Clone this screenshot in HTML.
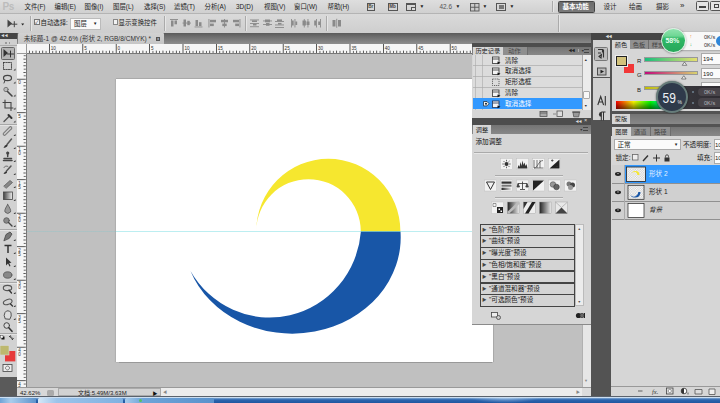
<!DOCTYPE html>
<html lang="zh-CN">
<head>
<meta charset="utf-8">
<title>Photoshop CS5 - 未标题-1</title>
<style>
html,body{margin:0;padding:0}
body{width:720px;height:403px;overflow:hidden;position:relative;background:#c0c0c0;
 font-family:"Liberation Sans","Noto Sans CJK SC",sans-serif;font-size:6.4px;line-height:8px;color:#1a1a1a}
.a{position:absolute;white-space:nowrap}
.t{position:absolute;white-space:nowrap;line-height:8px;height:8px}
svg{position:absolute;overflow:visible}
#menubar{left:0;top:0;width:720px;height:14px;background:linear-gradient(#dedede,#d0d0d0);border-bottom:1px solid #b4b4b4;box-sizing:border-box}
#menubar .t{top:2.5px;color:#222}
#optbar{left:0;top:14px;width:720px;height:19px;background:linear-gradient(#dadada,#cecece)}
#optbar .t{top:5px}
.vsep{position:absolute;width:1px;background:#aaa;box-shadow:1px 0 0 #e6e6e6}
#tabbar{left:0;top:33px;width:720px;height:11px;background:linear-gradient(#5a5a5a 0,#6a6a6a 3px,#8e8e8e 11px)}
#doctab{left:18px;top:33.3px;width:146px;height:10.9px;background:linear-gradient(#d2d2d2,#c6c6c6);border-radius:1px 1px 0 0}
#hruler{left:17px;top:44px;width:574px;height:9.5px;background:#f6f6f6;border-bottom:0.7px solid #777;box-sizing:border-box}
#vruler{left:17px;top:53px;width:9.6px;height:334px;background:#f6f6f6;border-right:0.7px solid #777;box-sizing:border-box}
.rn{position:absolute;font-size:4.6px;line-height:5px;color:#333}
#doc{left:115.8px;top:78.8px;width:377.5px;height:283.4px;background:#fff;box-shadow:0 0.8px 0.8px #999,0.6px 0 0.6px #aaa,0 -0.6px 0.6px #aaa,-1px 0 0.8px #b0b0b0}
#guide{left:27px;top:230.9px;width:555px;height:1px;background:linear-gradient(90deg,rgba(95,200,210,.2) 0,rgba(95,200,210,.2) 88.8px,rgba(95,215,222,.42) 88.8px,rgba(95,215,222,.42) 466.3px,rgba(95,200,210,.2) 466.3px)}
#toolbar{left:0;top:33px;width:17px;height:344px;background:#d2d2d2}
#tbhead{left:0;top:33px;width:17px;height:6.2px;background:#454545}
#tbbelow{left:0;top:377px;width:17px;height:19px;background:#5a5a5a}
#status{left:17px;top:387px;width:574px;height:9px;background:#d8d8d8;border-top:1px solid #999;box-sizing:border-box}
#taskbar{left:0;top:396px;width:720px;height:7px;background:linear-gradient(#5a626c 0,#5a626c 0.8px,#d4e3f2 0.9px,#c4d8ee 2.2px,#4a7fbe 2.6px,#2a62ab 4.5px,#1f57a0 7px)}
.panel{background:#d6d6d6}
.dk{background:#4d4d4d}
.mid{background:#8a8a8a}
.ptab{position:absolute;background:#d6d6d6;height:9px;line-height:9px;text-align:center;font-size:6.2px;color:#222}
.ptab2{position:absolute;height:9px;line-height:9px;text-align:center;font-size:6.2px;color:#444;border-right:1px solid #6d6d6d;box-sizing:border-box}
</style>
</head>
<body>

<div class="a" id="doc"></div>
<svg width="720" height="403" style="left:0;top:0">
<path fill="#f6e72f" d="M256.2 231.4 A72.1 72.6 0 0 1 400.4 231.4 L360.8 231.4 A52.3 52.3 0 0 0 256.2 231.4 Z"/>
<path fill="#1856a7" d="M400.5 231.4 A108.5 96.3 0 0 1 190.5 270.9 A91.5 93.6 0 0 0 360.9 231.4 Z"/>
</svg>
<div class="a" id="guide"></div>
<div class="a" id="hruler">
<svg width="574" height="10" style="left:0;top:0"><rect x="5.28" y="6.6" width="0.8" height="2.4" fill="#333"/><rect x="8.62" y="6.9" width="0.8" height="2.1" fill="#444"/><rect x="11.96" y="6.6" width="0.8" height="2.4" fill="#333"/><rect x="15.30" y="6.9" width="0.8" height="2.1" fill="#444"/><rect x="18.64" y="6.6" width="0.8" height="2.4" fill="#333"/><rect x="21.98" y="6.9" width="0.8" height="2.1" fill="#444"/><rect x="25.32" y="6.6" width="0.8" height="2.4" fill="#333"/><rect x="28.66" y="6.9" width="0.8" height="2.1" fill="#444"/><rect x="32.00" y="0" width="0.8" height="9" fill="#333"/><rect x="35.34" y="6.9" width="0.8" height="2.1" fill="#444"/><rect x="38.68" y="6.6" width="0.8" height="2.4" fill="#333"/><rect x="42.02" y="6.9" width="0.8" height="2.1" fill="#444"/><rect x="45.36" y="6.6" width="0.8" height="2.4" fill="#333"/><rect x="48.70" y="6.9" width="0.8" height="2.1" fill="#444"/><rect x="52.04" y="6.6" width="0.8" height="2.4" fill="#333"/><rect x="55.38" y="6.9" width="0.8" height="2.1" fill="#444"/><rect x="58.72" y="6.6" width="0.8" height="2.4" fill="#333"/><rect x="62.06" y="6.9" width="0.8" height="2.1" fill="#444"/><rect x="65.40" y="0" width="0.8" height="9" fill="#333"/><rect x="68.74" y="6.9" width="0.8" height="2.1" fill="#444"/><rect x="72.08" y="6.6" width="0.8" height="2.4" fill="#333"/><rect x="75.42" y="6.9" width="0.8" height="2.1" fill="#444"/><rect x="78.76" y="6.6" width="0.8" height="2.4" fill="#333"/><rect x="82.10" y="6.9" width="0.8" height="2.1" fill="#444"/><rect x="85.44" y="6.6" width="0.8" height="2.4" fill="#333"/><rect x="88.78" y="6.9" width="0.8" height="2.1" fill="#444"/><rect x="92.12" y="6.6" width="0.8" height="2.4" fill="#333"/><rect x="95.46" y="6.9" width="0.8" height="2.1" fill="#444"/><rect x="98.80" y="0" width="0.8" height="9" fill="#333"/><rect x="102.14" y="6.9" width="0.8" height="2.1" fill="#444"/><rect x="105.48" y="6.6" width="0.8" height="2.4" fill="#333"/><rect x="108.82" y="6.9" width="0.8" height="2.1" fill="#444"/><rect x="112.16" y="6.6" width="0.8" height="2.4" fill="#333"/><rect x="115.50" y="6.9" width="0.8" height="2.1" fill="#444"/><rect x="118.84" y="6.6" width="0.8" height="2.4" fill="#333"/><rect x="122.18" y="6.9" width="0.8" height="2.1" fill="#444"/><rect x="125.52" y="6.6" width="0.8" height="2.4" fill="#333"/><rect x="128.86" y="6.9" width="0.8" height="2.1" fill="#444"/><rect x="132.20" y="0" width="0.8" height="9" fill="#333"/><rect x="135.54" y="6.9" width="0.8" height="2.1" fill="#444"/><rect x="138.88" y="6.6" width="0.8" height="2.4" fill="#333"/><rect x="142.22" y="6.9" width="0.8" height="2.1" fill="#444"/><rect x="145.56" y="6.6" width="0.8" height="2.4" fill="#333"/><rect x="148.90" y="6.9" width="0.8" height="2.1" fill="#444"/><rect x="152.24" y="6.6" width="0.8" height="2.4" fill="#333"/><rect x="155.58" y="6.9" width="0.8" height="2.1" fill="#444"/><rect x="158.92" y="6.6" width="0.8" height="2.4" fill="#333"/><rect x="162.26" y="6.9" width="0.8" height="2.1" fill="#444"/><rect x="165.60" y="0" width="0.8" height="9" fill="#333"/><rect x="168.94" y="6.9" width="0.8" height="2.1" fill="#444"/><rect x="172.28" y="6.6" width="0.8" height="2.4" fill="#333"/><rect x="175.62" y="6.9" width="0.8" height="2.1" fill="#444"/><rect x="178.96" y="6.6" width="0.8" height="2.4" fill="#333"/><rect x="182.30" y="6.9" width="0.8" height="2.1" fill="#444"/><rect x="185.64" y="6.6" width="0.8" height="2.4" fill="#333"/><rect x="188.98" y="6.9" width="0.8" height="2.1" fill="#444"/><rect x="192.32" y="6.6" width="0.8" height="2.4" fill="#333"/><rect x="195.66" y="6.9" width="0.8" height="2.1" fill="#444"/><rect x="199.00" y="0" width="0.8" height="9" fill="#333"/><rect x="202.34" y="6.9" width="0.8" height="2.1" fill="#444"/><rect x="205.68" y="6.6" width="0.8" height="2.4" fill="#333"/><rect x="209.02" y="6.9" width="0.8" height="2.1" fill="#444"/><rect x="212.36" y="6.6" width="0.8" height="2.4" fill="#333"/><rect x="215.70" y="6.9" width="0.8" height="2.1" fill="#444"/><rect x="219.04" y="6.6" width="0.8" height="2.4" fill="#333"/><rect x="222.38" y="6.9" width="0.8" height="2.1" fill="#444"/><rect x="225.72" y="6.6" width="0.8" height="2.4" fill="#333"/><rect x="229.06" y="6.9" width="0.8" height="2.1" fill="#444"/><rect x="232.40" y="0" width="0.8" height="9" fill="#333"/><rect x="235.74" y="6.9" width="0.8" height="2.1" fill="#444"/><rect x="239.08" y="6.6" width="0.8" height="2.4" fill="#333"/><rect x="242.42" y="6.9" width="0.8" height="2.1" fill="#444"/><rect x="245.76" y="6.6" width="0.8" height="2.4" fill="#333"/><rect x="249.10" y="6.9" width="0.8" height="2.1" fill="#444"/><rect x="252.44" y="6.6" width="0.8" height="2.4" fill="#333"/><rect x="255.78" y="6.9" width="0.8" height="2.1" fill="#444"/><rect x="259.12" y="6.6" width="0.8" height="2.4" fill="#333"/><rect x="262.46" y="6.9" width="0.8" height="2.1" fill="#444"/><rect x="265.80" y="0" width="0.8" height="9" fill="#333"/><rect x="269.14" y="6.9" width="0.8" height="2.1" fill="#444"/><rect x="272.48" y="6.6" width="0.8" height="2.4" fill="#333"/><rect x="275.82" y="6.9" width="0.8" height="2.1" fill="#444"/><rect x="279.16" y="6.6" width="0.8" height="2.4" fill="#333"/><rect x="282.50" y="6.9" width="0.8" height="2.1" fill="#444"/><rect x="285.84" y="6.6" width="0.8" height="2.4" fill="#333"/><rect x="289.18" y="6.9" width="0.8" height="2.1" fill="#444"/><rect x="292.52" y="6.6" width="0.8" height="2.4" fill="#333"/><rect x="295.86" y="6.9" width="0.8" height="2.1" fill="#444"/><rect x="299.20" y="0" width="0.8" height="9" fill="#333"/><rect x="302.54" y="6.9" width="0.8" height="2.1" fill="#444"/><rect x="305.88" y="6.6" width="0.8" height="2.4" fill="#333"/><rect x="309.22" y="6.9" width="0.8" height="2.1" fill="#444"/><rect x="312.56" y="6.6" width="0.8" height="2.4" fill="#333"/><rect x="315.90" y="6.9" width="0.8" height="2.1" fill="#444"/><rect x="319.24" y="6.6" width="0.8" height="2.4" fill="#333"/><rect x="322.58" y="6.9" width="0.8" height="2.1" fill="#444"/><rect x="325.92" y="6.6" width="0.8" height="2.4" fill="#333"/><rect x="329.26" y="6.9" width="0.8" height="2.1" fill="#444"/><rect x="332.60" y="0" width="0.8" height="9" fill="#333"/><rect x="335.94" y="6.9" width="0.8" height="2.1" fill="#444"/><rect x="339.28" y="6.6" width="0.8" height="2.4" fill="#333"/><rect x="342.62" y="6.9" width="0.8" height="2.1" fill="#444"/><rect x="345.96" y="6.6" width="0.8" height="2.4" fill="#333"/><rect x="349.30" y="6.9" width="0.8" height="2.1" fill="#444"/><rect x="352.64" y="6.6" width="0.8" height="2.4" fill="#333"/><rect x="355.98" y="6.9" width="0.8" height="2.1" fill="#444"/><rect x="359.32" y="6.6" width="0.8" height="2.4" fill="#333"/><rect x="362.66" y="6.9" width="0.8" height="2.1" fill="#444"/><rect x="366.00" y="0" width="0.8" height="9" fill="#333"/><rect x="369.34" y="6.9" width="0.8" height="2.1" fill="#444"/><rect x="372.68" y="6.6" width="0.8" height="2.4" fill="#333"/><rect x="376.02" y="6.9" width="0.8" height="2.1" fill="#444"/><rect x="379.36" y="6.6" width="0.8" height="2.4" fill="#333"/><rect x="382.70" y="6.9" width="0.8" height="2.1" fill="#444"/><rect x="386.04" y="6.6" width="0.8" height="2.4" fill="#333"/><rect x="389.38" y="6.9" width="0.8" height="2.1" fill="#444"/><rect x="392.72" y="6.6" width="0.8" height="2.4" fill="#333"/><rect x="396.06" y="6.9" width="0.8" height="2.1" fill="#444"/><rect x="399.40" y="0" width="0.8" height="9" fill="#333"/><rect x="402.74" y="6.9" width="0.8" height="2.1" fill="#444"/><rect x="406.08" y="6.6" width="0.8" height="2.4" fill="#333"/><rect x="409.42" y="6.9" width="0.8" height="2.1" fill="#444"/><rect x="412.76" y="6.6" width="0.8" height="2.4" fill="#333"/><rect x="416.10" y="6.9" width="0.8" height="2.1" fill="#444"/><rect x="419.44" y="6.6" width="0.8" height="2.4" fill="#333"/><rect x="422.78" y="6.9" width="0.8" height="2.1" fill="#444"/><rect x="426.12" y="6.6" width="0.8" height="2.4" fill="#333"/><rect x="429.46" y="6.9" width="0.8" height="2.1" fill="#444"/><rect x="432.80" y="0" width="0.8" height="9" fill="#333"/><rect x="436.14" y="6.9" width="0.8" height="2.1" fill="#444"/><rect x="439.48" y="6.6" width="0.8" height="2.4" fill="#333"/><rect x="442.82" y="6.9" width="0.8" height="2.1" fill="#444"/><rect x="446.16" y="6.6" width="0.8" height="2.4" fill="#333"/><rect x="449.50" y="6.9" width="0.8" height="2.1" fill="#444"/><rect x="452.84" y="6.6" width="0.8" height="2.4" fill="#333"/><rect x="456.18" y="6.9" width="0.8" height="2.1" fill="#444"/><rect x="459.52" y="6.6" width="0.8" height="2.4" fill="#333"/><rect x="462.86" y="6.9" width="0.8" height="2.1" fill="#444"/><rect x="466.20" y="0" width="0.8" height="9" fill="#333"/><rect x="469.54" y="6.9" width="0.8" height="2.1" fill="#444"/><rect x="472.88" y="6.6" width="0.8" height="2.4" fill="#333"/><rect x="476.22" y="6.9" width="0.8" height="2.1" fill="#444"/><rect x="479.56" y="6.6" width="0.8" height="2.4" fill="#333"/><rect x="482.90" y="6.9" width="0.8" height="2.1" fill="#444"/><rect x="486.24" y="6.6" width="0.8" height="2.4" fill="#333"/><rect x="489.58" y="6.9" width="0.8" height="2.1" fill="#444"/><rect x="492.92" y="6.6" width="0.8" height="2.4" fill="#333"/><rect x="496.26" y="6.9" width="0.8" height="2.1" fill="#444"/><rect x="499.60" y="0" width="0.8" height="9" fill="#333"/><rect x="502.94" y="6.9" width="0.8" height="2.1" fill="#444"/><rect x="506.28" y="6.6" width="0.8" height="2.4" fill="#333"/><rect x="509.62" y="6.9" width="0.8" height="2.1" fill="#444"/><rect x="512.96" y="6.6" width="0.8" height="2.4" fill="#333"/><rect x="516.30" y="6.9" width="0.8" height="2.1" fill="#444"/><rect x="519.64" y="6.6" width="0.8" height="2.4" fill="#333"/><rect x="522.98" y="6.9" width="0.8" height="2.1" fill="#444"/><rect x="526.32" y="6.6" width="0.8" height="2.4" fill="#333"/><rect x="529.66" y="6.9" width="0.8" height="2.1" fill="#444"/><rect x="533.00" y="0" width="0.8" height="9" fill="#333"/><rect x="536.34" y="6.9" width="0.8" height="2.1" fill="#444"/><rect x="539.68" y="6.6" width="0.8" height="2.4" fill="#333"/><rect x="543.02" y="6.9" width="0.8" height="2.1" fill="#444"/><rect x="546.36" y="6.6" width="0.8" height="2.4" fill="#333"/><rect x="549.70" y="6.9" width="0.8" height="2.1" fill="#444"/><rect x="553.04" y="6.6" width="0.8" height="2.4" fill="#333"/><rect x="556.38" y="6.9" width="0.8" height="2.1" fill="#444"/><rect x="559.72" y="6.6" width="0.8" height="2.4" fill="#333"/><rect x="563.06" y="6.9" width="0.8" height="2.1" fill="#444"/><rect x="566.40" y="0" width="0.8" height="9" fill="#333"/><rect x="569.74" y="6.9" width="0.8" height="2.1" fill="#444"/></svg>
<span class="rn" style="left:33.8px;top:1.6px">10</span>
<span class="rn" style="left:67.2px;top:1.6px">5</span>
<span class="rn" style="left:100.6px;top:1.6px">0</span>
<span class="rn" style="left:134.0px;top:1.6px">5</span>
<span class="rn" style="left:167.4px;top:1.6px">10</span>
<span class="rn" style="left:200.8px;top:1.6px">15</span>
<span class="rn" style="left:234.2px;top:1.6px">20</span>
<span class="rn" style="left:267.6px;top:1.6px">25</span>
<span class="rn" style="left:301.0px;top:1.6px">30</span>
<span class="rn" style="left:334.4px;top:1.6px">35</span>
<span class="rn" style="left:367.8px;top:1.6px">40</span>
<span class="rn" style="left:401.2px;top:1.6px">45</span>
<span class="rn" style="left:434.6px;top:1.6px">50</span>
</div>
<div class="a" id="vruler">
<svg width="10" height="334" style="left:0;top:0"><rect x="6.7" y="2.35" width="2.1" height="0.8" fill="#444"/><rect x="6.4" y="5.70" width="2.4" height="0.8" fill="#333"/><rect x="6.7" y="9.05" width="2.1" height="0.8" fill="#444"/><rect x="6.4" y="12.40" width="2.4" height="0.8" fill="#333"/><rect x="6.7" y="15.75" width="2.1" height="0.8" fill="#444"/><rect x="6.4" y="19.10" width="2.4" height="0.8" fill="#333"/><rect x="6.7" y="22.45" width="2.1" height="0.8" fill="#444"/><rect x="0" y="25.80" width="8.8" height="0.8" fill="#333"/><rect x="6.7" y="29.15" width="2.1" height="0.8" fill="#444"/><rect x="6.4" y="32.50" width="2.4" height="0.8" fill="#333"/><rect x="6.7" y="35.85" width="2.1" height="0.8" fill="#444"/><rect x="6.4" y="39.20" width="2.4" height="0.8" fill="#333"/><rect x="6.7" y="42.55" width="2.1" height="0.8" fill="#444"/><rect x="6.4" y="45.90" width="2.4" height="0.8" fill="#333"/><rect x="6.7" y="49.25" width="2.1" height="0.8" fill="#444"/><rect x="6.4" y="52.60" width="2.4" height="0.8" fill="#333"/><rect x="6.7" y="55.95" width="2.1" height="0.8" fill="#444"/><rect x="0" y="59.30" width="8.8" height="0.8" fill="#333"/><rect x="6.7" y="62.65" width="2.1" height="0.8" fill="#444"/><rect x="6.4" y="66.00" width="2.4" height="0.8" fill="#333"/><rect x="6.7" y="69.35" width="2.1" height="0.8" fill="#444"/><rect x="6.4" y="72.70" width="2.4" height="0.8" fill="#333"/><rect x="6.7" y="76.05" width="2.1" height="0.8" fill="#444"/><rect x="6.4" y="79.40" width="2.4" height="0.8" fill="#333"/><rect x="6.7" y="82.75" width="2.1" height="0.8" fill="#444"/><rect x="6.4" y="86.10" width="2.4" height="0.8" fill="#333"/><rect x="6.7" y="89.45" width="2.1" height="0.8" fill="#444"/><rect x="0" y="92.80" width="8.8" height="0.8" fill="#333"/><rect x="6.7" y="96.15" width="2.1" height="0.8" fill="#444"/><rect x="6.4" y="99.50" width="2.4" height="0.8" fill="#333"/><rect x="6.7" y="102.85" width="2.1" height="0.8" fill="#444"/><rect x="6.4" y="106.20" width="2.4" height="0.8" fill="#333"/><rect x="6.7" y="109.55" width="2.1" height="0.8" fill="#444"/><rect x="6.4" y="112.90" width="2.4" height="0.8" fill="#333"/><rect x="6.7" y="116.25" width="2.1" height="0.8" fill="#444"/><rect x="6.4" y="119.60" width="2.4" height="0.8" fill="#333"/><rect x="6.7" y="122.95" width="2.1" height="0.8" fill="#444"/><rect x="0" y="126.30" width="8.8" height="0.8" fill="#333"/><rect x="6.7" y="129.65" width="2.1" height="0.8" fill="#444"/><rect x="6.4" y="133.00" width="2.4" height="0.8" fill="#333"/><rect x="6.7" y="136.35" width="2.1" height="0.8" fill="#444"/><rect x="6.4" y="139.70" width="2.4" height="0.8" fill="#333"/><rect x="6.7" y="143.05" width="2.1" height="0.8" fill="#444"/><rect x="6.4" y="146.40" width="2.4" height="0.8" fill="#333"/><rect x="6.7" y="149.75" width="2.1" height="0.8" fill="#444"/><rect x="6.4" y="153.10" width="2.4" height="0.8" fill="#333"/><rect x="6.7" y="156.45" width="2.1" height="0.8" fill="#444"/><rect x="0" y="159.80" width="8.8" height="0.8" fill="#333"/><rect x="6.7" y="163.15" width="2.1" height="0.8" fill="#444"/><rect x="6.4" y="166.50" width="2.4" height="0.8" fill="#333"/><rect x="6.7" y="169.85" width="2.1" height="0.8" fill="#444"/><rect x="6.4" y="173.20" width="2.4" height="0.8" fill="#333"/><rect x="6.7" y="176.55" width="2.1" height="0.8" fill="#444"/><rect x="6.4" y="179.90" width="2.4" height="0.8" fill="#333"/><rect x="6.7" y="183.25" width="2.1" height="0.8" fill="#444"/><rect x="6.4" y="186.60" width="2.4" height="0.8" fill="#333"/><rect x="6.7" y="189.95" width="2.1" height="0.8" fill="#444"/><rect x="0" y="193.30" width="8.8" height="0.8" fill="#333"/><rect x="6.7" y="196.65" width="2.1" height="0.8" fill="#444"/><rect x="6.4" y="200.00" width="2.4" height="0.8" fill="#333"/><rect x="6.7" y="203.35" width="2.1" height="0.8" fill="#444"/><rect x="6.4" y="206.70" width="2.4" height="0.8" fill="#333"/><rect x="6.7" y="210.05" width="2.1" height="0.8" fill="#444"/><rect x="6.4" y="213.40" width="2.4" height="0.8" fill="#333"/><rect x="6.7" y="216.75" width="2.1" height="0.8" fill="#444"/><rect x="6.4" y="220.10" width="2.4" height="0.8" fill="#333"/><rect x="6.7" y="223.45" width="2.1" height="0.8" fill="#444"/><rect x="0" y="226.80" width="8.8" height="0.8" fill="#333"/><rect x="6.7" y="230.15" width="2.1" height="0.8" fill="#444"/><rect x="6.4" y="233.50" width="2.4" height="0.8" fill="#333"/><rect x="6.7" y="236.85" width="2.1" height="0.8" fill="#444"/><rect x="6.4" y="240.20" width="2.4" height="0.8" fill="#333"/><rect x="6.7" y="243.55" width="2.1" height="0.8" fill="#444"/><rect x="6.4" y="246.90" width="2.4" height="0.8" fill="#333"/><rect x="6.7" y="250.25" width="2.1" height="0.8" fill="#444"/><rect x="6.4" y="253.60" width="2.4" height="0.8" fill="#333"/><rect x="6.7" y="256.95" width="2.1" height="0.8" fill="#444"/><rect x="0" y="260.30" width="8.8" height="0.8" fill="#333"/><rect x="6.7" y="263.65" width="2.1" height="0.8" fill="#444"/><rect x="6.4" y="267.00" width="2.4" height="0.8" fill="#333"/><rect x="6.7" y="270.35" width="2.1" height="0.8" fill="#444"/><rect x="6.4" y="273.70" width="2.4" height="0.8" fill="#333"/><rect x="6.7" y="277.05" width="2.1" height="0.8" fill="#444"/><rect x="6.4" y="280.40" width="2.4" height="0.8" fill="#333"/><rect x="6.7" y="283.75" width="2.1" height="0.8" fill="#444"/><rect x="6.4" y="287.10" width="2.4" height="0.8" fill="#333"/><rect x="6.7" y="290.45" width="2.1" height="0.8" fill="#444"/><rect x="0" y="293.80" width="8.8" height="0.8" fill="#333"/><rect x="6.7" y="297.15" width="2.1" height="0.8" fill="#444"/><rect x="6.4" y="300.50" width="2.4" height="0.8" fill="#333"/><rect x="6.7" y="303.85" width="2.1" height="0.8" fill="#444"/><rect x="6.4" y="307.20" width="2.4" height="0.8" fill="#333"/><rect x="6.7" y="310.55" width="2.1" height="0.8" fill="#444"/><rect x="6.4" y="313.90" width="2.4" height="0.8" fill="#333"/><rect x="6.7" y="317.25" width="2.1" height="0.8" fill="#444"/><rect x="6.4" y="320.60" width="2.4" height="0.8" fill="#333"/><rect x="6.7" y="323.95" width="2.1" height="0.8" fill="#444"/><rect x="0" y="327.30" width="8.8" height="0.8" fill="#333"/><rect x="6.7" y="330.65" width="2.1" height="0.8" fill="#444"/></svg>
<span class="rn" style="left:1.2px;top:27.0px">0</span>
<span class="rn" style="left:1.2px;top:60.5px">5</span>
<span class="rn" style="left:1.2px;top:94.0px">1</span>
<span class="rn" style="left:1.2px;top:98.2px">0</span>
<span class="rn" style="left:1.2px;top:127.5px">1</span>
<span class="rn" style="left:1.2px;top:131.7px">5</span>
<span class="rn" style="left:1.2px;top:161.0px">2</span>
<span class="rn" style="left:1.2px;top:165.2px">0</span>
<span class="rn" style="left:1.2px;top:194.5px">2</span>
<span class="rn" style="left:1.2px;top:198.7px">5</span>
<span class="rn" style="left:1.2px;top:228.0px">3</span>
<span class="rn" style="left:1.2px;top:232.2px">0</span>
<span class="rn" style="left:1.2px;top:261.5px">3</span>
<span class="rn" style="left:1.2px;top:265.7px">5</span>
<span class="rn" style="left:1.2px;top:295.0px">4</span>
<span class="rn" style="left:1.2px;top:299.2px">0</span>
<span class="rn" style="left:1.2px;top:328.5px">4</span>
<span class="rn" style="left:1.2px;top:332.7px">5</span>
</div>
<div class="a" style="left:17px;top:44px;width:9.6px;height:9.5px;background:#f6f6f6;border-right:1px solid #999;border-bottom:1px solid #999;box-sizing:border-box"></div>
<!-- tab bar -->
<div class="a" id="tabbar"></div>
<div class="a" id="doctab"><span class="t" style="left:5.7px;top:2px;font-size:6.55px;color:#333">未标题-1 @ 42.6% (形状 2, RGB/8/CMYK) *</span>
<span class="a" style="left:137.5px;top:3.4px;width:4.6px;height:4.6px;border:0.6px solid #555;box-sizing:border-box;font-size:4.5px;line-height:3.4px;text-align:center;color:#444">×</span></div>

<!-- menu bar -->
<div class="a" id="menubar">
<span class="a" style="left:2.5px;top:0.5px;font-size:10px;line-height:12px;font-weight:bold;color:#bcbcbc;letter-spacing:-0.3px">Ps</span>
<span class="t" style="left:24.5px">文件(F)</span>
<span class="t" style="left:54.5px">编辑(E)</span>
<span class="t" style="left:84.5px">图像(I)</span>
<span class="t" style="left:113px">图层(L)</span>
<span class="t" style="left:144px">选择(S)</span>
<span class="t" style="left:174px">滤镜(T)</span>
<span class="t" style="left:204.5px">分析(A)</span>
<span class="t" style="left:236px">3D(D)</span>
<span class="t" style="left:264px">视图(V)</span>
<span class="t" style="left:294px">窗口(W)</span>
<span class="t" style="left:327.5px">帮助(H)</span>
<!-- app bar icons -->
<span class="a" style="left:367px;top:3px;width:7.5px;height:7.5px;border:0.7px solid #555;box-sizing:border-box;font-size:4.6px;line-height:6px;text-align:center;font-weight:bold;color:#444">Br</span>
<span class="a" style="left:387.5px;top:3px;width:10px;height:7.5px;border:0.7px solid #555;box-sizing:border-box;font-size:4.6px;line-height:6px;text-align:center;font-weight:bold;color:#444">Mb</span>
<span class="a" style="left:406px;top:2.5px;width:10px;height:8.5px;border:0.9px solid #555;border-top-width:2px;box-sizing:border-box"></span>
<span class="a" style="left:410.5px;top:6.5px;width:5.5px;height:4.5px;border:0.7px solid #555;box-sizing:border-box;background:#ddd"></span>
<span class="t" style="left:419.5px;font-size:4.8px;top:3px;color:#222">▼</span>
<span class="t" style="left:439.5px;color:#555">42.6</span>
<span class="t" style="left:455.5px;font-size:4.8px;top:3px;color:#222">▼</span>
<svg width="10" height="9" style="left:470px;top:2.5px" fill="none" stroke="#555" stroke-width="0.9"><rect x="0.5" y="0.5" width="8.5" height="7.5" fill="#ccc"/><path d="M4.75 0.5v7.5M0.5 4.25h8.5"/></svg>
<span class="t" style="left:482.5px;font-size:4.8px;top:3px;color:#222">▼</span>
<span class="a" style="left:496px;top:2.5px;width:10px;height:8.5px;border:0.8px solid #555;box-sizing:border-box"></span>
<span class="a" style="left:498.5px;top:4.5px;width:5px;height:4.5px;background:#777"></span>
<span class="t" style="left:509.5px;font-size:4.8px;top:3px;color:#222">▼</span>
<span class="vsep" style="left:552px;top:1px;height:11px"></span>
<span class="a" style="left:557.5px;top:0.5px;width:37px;height:12px;background:linear-gradient(#6c6c6c,#7a7a7a);border-radius:1.5px;border:0.5px solid #444;box-sizing:border-box"></span>
<span class="t" style="left:562.5px;color:#fff;font-weight:bold;top:2.5px;font-size:6.6px">基本功能</span>
<span class="t" style="left:603.5px;font-size:6.6px">设计</span>
<span class="t" style="left:629px;font-size:6.6px">绘画</span>
<span class="t" style="left:656px;font-size:6.6px">摄影</span>
<span class="t" style="left:680px;font-size:8px;top:1.8px;letter-spacing:-1px">»</span>
<span class="a" style="left:696px;top:1px;width:12.5px;height:9.5px;border:0.8px solid #555;border-radius:1.5px;box-sizing:border-box;background:#e4e4e4"></span>
<span class="a" style="left:699px;top:6.2px;width:6.5px;height:1.6px;border:0.6px solid #444;box-sizing:border-box;background:#fff"></span>
<span class="a" style="left:710px;top:1px;width:12.5px;height:9.5px;border:0.8px solid #555;border-radius:1.5px;box-sizing:border-box;background:#e4e4e4"></span>
<span class="a" style="left:714px;top:3.5px;width:5px;height:4px;border:0.7px solid #444;box-sizing:border-box"></span>
</div>

<!-- options bar -->
<div class="a" id="optbar">
<svg width="20" height="12" style="left:6px;top:3.5px"><path d="M1.5 1.5 L1.5 9.5 L6.2 5.5 Z" fill="#444"/><path d="M8.3 3.2v6M5.3 6.2h6" stroke="#444" stroke-width="1" fill="none"/><path d="M15.2 5.5h3l-1.5 2z" fill="#222"/></svg>
<span class="vsep" style="left:29.5px;top:2px;height:15px"></span>
<span class="a" style="left:34px;top:5px;width:5.5px;height:5.5px;border:0.6px solid #777;background:#f2f2f2;box-sizing:border-box;font-size:5px;line-height:4.5px;color:#333">✓</span>
<span class="t" style="left:40.5px">自动选择:</span>
<span class="a" style="left:70px;top:4px;width:31px;height:11.5px;background:#fafafa;border:0.5px solid #bbb;box-sizing:border-box"></span>
<span class="t" style="left:74px;top:6px">图层</span>
<span class="t" style="left:93px;font-size:4.4px;top:6px">▼</span>
<span class="a" style="left:112.5px;top:5px;width:5.5px;height:5.5px;border:0.6px solid #888;background:#f2f2f2;box-sizing:border-box"></span>
<span class="t" style="left:118.5px">显示变换控件</span>
<span class="vsep" style="left:164px;top:2px;height:15px"></span>
<svg width="180" height="12" style="left:170px;top:4px" fill="#8a8a8a" stroke="none">
<g id="al"><rect x="0" y="1" width="8" height="0.9"/><rect x="1" y="2.5" width="2.5" height="6"/><rect x="4.5" y="2.5" width="2.5" height="3.8"/></g>
<g transform="translate(12.5 0)"><rect x="0" y="4.6" width="8.5" height="0.9"/><rect x="1" y="1.5" width="2.5" height="7"/><rect x="4.8" y="2.8" width="2.5" height="4.4"/></g>
<g transform="translate(24.5 0)"><rect x="0" y="8.5" width="8" height="0.9"/><rect x="1" y="2" width="2.5" height="6"/><rect x="4.5" y="4.2" width="2.5" height="3.8"/></g>
<g transform="translate(38 0)"><rect x="0.5" y="1" width="0.9" height="8.5"/><rect x="2" y="1.8" width="6" height="2.5"/><rect x="2" y="5.6" width="3.8" height="2.5"/></g>
<g transform="translate(50 0)"><rect x="4" y="1" width="0.9" height="8.5"/><rect x="1" y="1.8" width="7" height="2.5"/><rect x="2.3" y="5.6" width="4.4" height="2.5"/></g>
<g transform="translate(62 0)"><rect x="7.5" y="1" width="0.9" height="8.5"/><rect x="1" y="1.8" width="6" height="2.5"/><rect x="3.2" y="5.6" width="3.8" height="2.5"/></g>
<g transform="translate(80 0)"><rect x="0" y="1.5" width="9" height="0.9"/><rect x="0" y="5" width="9" height="0.9"/><rect x="0" y="8.3" width="9" height="0.9"/><rect x="2" y="2.4" width="5" height="1.6"/><rect x="3" y="5.9" width="3.5" height="1.6"/></g>
<g transform="translate(93 0)"><rect x="0" y="2.5" width="9" height="0.9"/><rect x="0" y="6" width="9" height="0.9"/><rect x="2" y="1.5" width="5" height="2.8"/><rect x="3" y="5" width="3.5" height="2.8"/></g>
<g transform="translate(105 0)"><rect x="0" y="3" width="9" height="0.9"/><rect x="0" y="6.5" width="9" height="0.9"/><rect x="0" y="9" width="9" height="0.9"/><rect x="2" y="1.4" width="5" height="1.6"/><rect x="3" y="4.9" width="3.5" height="1.6"/></g>
<g transform="translate(120 0)"><rect x="1" y="1" width="0.9" height="8.5"/><rect x="4.5" y="1" width="0.9" height="8.5"/><rect x="1.9" y="2.5" width="1.8" height="5"/><rect x="5.4" y="3.5" width="1.8" height="3.5"/></g>
<g transform="translate(131.5 0)"><rect x="2.3" y="1" width="0.9" height="8.5"/><rect x="6" y="1" width="0.9" height="8.5"/><rect x="1" y="2.5" width="3.4" height="5"/><rect x="5" y="3.5" width="3" height="3.5"/></g>
<g transform="translate(143 0)"><rect x="3" y="1" width="0.9" height="8.5"/><rect x="7" y="1" width="0.9" height="8.5"/><rect x="1.2" y="2.5" width="1.8" height="5"/><rect x="5.2" y="3.5" width="1.8" height="3.5"/></g>
<g transform="translate(162.5 0)"><rect x="0" y="2" width="3" height="6.5"/><rect x="5.5" y="2" width="3" height="6.5"/><rect x="3.8" y="0.8" width="0.9" height="9"/></g>
</svg>
<span class="vsep" style="left:244.5px;top:2px;height:15px"></span>
<span class="vsep" style="left:326px;top:2px;height:15px"></span>
<span class="vsep" style="left:558px;top:1px;height:17px"></span>
</div>

<!-- status bar -->
<div class="a" id="status">
<span class="t" style="left:3px;top:0.6px;font-size:6px;color:#222">42.62%</span>
<span class="a" style="left:30px;top:1.5px;width:6.5px;height:6px;border-radius:1.5px;background:#aaa"></span>
<span class="a" style="left:41px;top:0.3px;width:112px;height:8px;border:0.5px solid #aaa;box-sizing:border-box;background:#d2d2d2"></span>
<span class="t" style="left:61px;top:0.6px;font-size:6px;color:#222">文档:5.49M/3.63M</span>
<span class="t" style="left:135.5px;top:1px;font-size:5px;color:#111">▶</span>
<span class="a" style="left:143px;top:0;width:422px;height:8.2px;background:#ececec;border-left:0.5px solid #aaa"></span>
<span class="t" style="left:146px;top:1px;font-size:4px;color:#888">◀</span>
<span class="t" style="left:559px;top:1px;font-size:4px;color:#888">▶</span>
<span class="a" style="left:565px;top:0;width:9px;height:8.2px;background:#dcdcdc"></span>
</div>
<!-- canvas vertical scrollbar -->
<div class="a" style="left:582px;top:53px;width:9px;height:334px;background:#e6e6e6;border-left:0.5px solid #b0b0b0;box-sizing:border-box"></div>
<span class="t" style="left:584px;top:377px;font-size:4px;color:#888">▼</span>
<!-- windows taskbar sliver -->
<div class="a" id="taskbar"></div>
<div class="a" style="left:0;top:398.3px;width:36px;height:5px;background:linear-gradient(90deg,#6fa3d6,#a9cdec 30%,#5d93cc)"></div>
<div class="a" style="left:37.5px;top:398.4px;width:85px;height:5px;background:linear-gradient(90deg,#d6e8f7 0,#9cc4ea 22%,#7fb1e1);border-radius:1.5px 1.5px 0 0"></div>
<div class="a" style="left:125px;top:398.4px;width:89px;height:5px;background:linear-gradient(90deg,#a8cbea 0,#6ea4d8 20%,#5a92cc);border-radius:1.5px 1.5px 0 0"></div>
<div class="a" style="left:139px;top:399px;width:3px;height:3px;background:#58c060;border-radius:50%"></div>
<div class="a" style="left:470px;top:398.3px;width:70px;height:5px;background:radial-gradient(ellipse at 50% 0,rgba(200,225,250,.55),rgba(200,225,250,0) 70%)"></div>

<!-- toolbox -->
<div class="a" id="toolbar"></div>
<div class="a" id="tbhead"><span class="a" style="left:1px;top:1px;font-size:3.5px;line-height:4px;color:#ddd">◀◀</span></div>
<div class="a" style="left:0;top:39.2px;width:17px;height:6.8px;background:#cfcfcf;border-bottom:0.5px solid #aaa;box-sizing:border-box"></div>
<div class="a" style="left:5px;top:41.7px;width:7px;height:2px;background:repeating-linear-gradient(90deg,#999 0,#999 0.7px,transparent 0.7px,transparent 1.4px)"></div>
<div class="a" style="left:0.8px;top:47px;width:14.5px;height:12.6px;background:#b4b4b4;border:0.7px solid #666;border-radius:1.5px;box-sizing:border-box"></div>
<div class="a" style="left:0;top:124px;width:17px;height:1px;background:#a8a8a8;box-shadow:0 1px 0 #e4e4e4"></div>
<div class="a" style="left:0;top:228.5px;width:17px;height:1px;background:#a8a8a8;box-shadow:0 1px 0 #e4e4e4"></div>
<div class="a" style="left:0;top:281.5px;width:17px;height:1px;background:#a8a8a8;box-shadow:0 1px 0 #e4e4e4"></div>
<div class="a" style="left:0;top:333px;width:17px;height:1px;background:#a8a8a8;box-shadow:0 1px 0 #e4e4e4"></div>
<svg width="17" height="345" style="left:0;top:33px" fill="none" stroke="#444" stroke-width="1" stroke-linecap="round">
<!-- move (y=53 => local 20) -->
<path d="M3.5 16 L3.5 24 L8 20 Z" fill="#333" stroke="none"/><path d="M10.5 18v6M7.5 21h6" stroke="#333"/>
<!-- marquee 66 => 33 -->
<rect x="3.5" y="29.5" width="8" height="7" stroke-dasharray="1.4 1" stroke="#333" stroke-width="0.8"/>
<!-- lasso 79 => 46 -->
<ellipse cx="7.5" cy="45" rx="4" ry="2.6" stroke="#444" stroke-width="1.2"/><path d="M5 47.5 L4 50" stroke="#444"/>
<!-- wand 92 => 59 -->
<circle cx="6" cy="56.5" r="2.2" stroke="#666" fill="#bbb" stroke-width="0.8"/><path d="M7.5 58.5 L12 63" stroke="#444" stroke-width="1.6"/>
<!-- crop 105 => 72 -->
<path d="M5 67v8h8M3 69.5h8v8" stroke="#444" stroke-width="1.1"/>
<!-- eyedropper 117.5 => 84.5 -->
<path d="M4 88.5 L9 83.5" stroke="#555" stroke-width="1.4"/><path d="M8.5 82 L11.5 85" stroke="#333" stroke-width="2"/>
<!-- heal 131 => 98 -->
<path d="M4.5 101 L10.5 95" stroke="#777" stroke-width="3.6"/><path d="M4.5 101 L10.5 95" stroke="#ccc" stroke-width="1.6"/>
<!-- brush 144 => 111 -->
<path d="M11.5 106 L7 111.5" stroke="#555" stroke-width="1.5"/><path d="M3.5 115 Q5 111 7.5 112 Q8 114 3.5 115Z" fill="#333" stroke="none"/>
<!-- stamp 157 => 124 -->
<path d="M7.7 119.5v4M4 125.5h7.5M3.5 127.5h8.5" stroke="#444" stroke-width="1.5"/><circle cx="7.7" cy="120" r="1.6" fill="#444" stroke="none"/>
<!-- history brush 170 => 137 -->
<path d="M11 133 L6.5 138" stroke="#555" stroke-width="1.5"/><path d="M3.5 141 Q5 137.5 7 138.5 Q7.5 140.5 3.5 141Z" fill="#333" stroke="none"/><path d="M4 134.5a2.5 2.5 0 0 1 4 -1" stroke="#555" stroke-width="0.8"/>
<!-- eraser 183 => 150 -->
<path d="M4 153 L10 147.5 L12.5 149.5 L6.5 155 Z" fill="#888" stroke="#555" stroke-width="0.7"/>
<!-- gradient 196 => 163 -->
<rect x="3.5" y="159" width="9" height="7.5" fill="url(#gr1)" stroke="#444" stroke-width="0.8"/>
<!-- blur 209 => 176 -->
<path d="M7.7 171.5 Q11.5 177 10.5 179 Q7.7 182 5 179 Q4 177 7.7 171.5Z" fill="#999" stroke="#555" stroke-width="0.8"/>
<!-- dodge 222 => 189 -->
<circle cx="6.5" cy="187.5" r="2.8" fill="#888" stroke="#555" stroke-width="0.8"/><path d="M8.5 189.5 L12 193" stroke="#444" stroke-width="1.4"/>
<!-- pen 236 => 203 -->
<path d="M4 207.5 L6 201.5 L10 199 L12 201 L9.5 205 Z" fill="#777" stroke="#444" stroke-width="0.8"/>
<!-- T 249 => 216 -->
<path d="M4.5 212.5h7M8 212.5v7.5" stroke="#333" stroke-width="1.5" stroke-linecap="butt"/>
<!-- path select 262 => 229 -->
<path d="M6 224.5 L6 232.5 L8 230.5 L9.5 233.5 L10.5 233 L9.2 230 L11.5 229.8 Z" fill="#333" stroke="none"/>
<!-- ellipse shape 275 => 242 -->
<ellipse cx="7.7" cy="242" rx="4.2" ry="3.2" fill="#888" stroke="#555" stroke-width="0.8"/>
<!-- 3D rotate 288.7 => 255.7 -->
<ellipse cx="7.5" cy="255" rx="4.2" ry="2.6" stroke="#555" stroke-width="1.1"/><path d="M9 257 L11.5 260" stroke="#333" stroke-width="1.3"/>
<!-- 3D orbit 302 => 269 -->
<ellipse cx="7.7" cy="269" rx="4.5" ry="2.5" stroke="#555" stroke-width="1.1" transform="rotate(-20 7.7 269)"/><path d="M10.5 271 L12.5 273" stroke="#333" stroke-width="1.2"/>
<!-- hand 315 => 282 -->
<path d="M5 285.5 Q3.2 282 5 279.5 L6.5 278 L8 277.8 L9.5 278.3 L11 279.5 Q12 283 10 286 Z" fill="#ddd" stroke="#444" stroke-width="0.9"/>
<!-- zoom 327 => 294 -->
<circle cx="6.7" cy="292.5" r="2.8" stroke="#444" stroke-width="1" fill="#d8d8d8"/><path d="M8.8 294.8 L12 298.3" stroke="#333" stroke-width="1.6"/>
<!-- mini default colors 339 => 306 -->
<rect x="1.5" y="303.5" width="3" height="3" fill="#111" stroke="none"/><rect x="0.5" y="302.5" width="2.5" height="2.5" fill="#fff" stroke="#333" stroke-width="0.4"/>
<path d="M9.5 303.5 q3 -0.5 3 3M9.5 303.5l1.3 -1M9.5 303.5l1.3 1.2M12.5 306.5l-1.2 -1M12.5 306.5l1 -1.2" stroke="#333" stroke-width="0.7"/>
<!-- bg/fg swatches -->
<rect x="5" y="318" width="10.3" height="10.4" fill="#e73a3a" stroke="none"/>
<rect x="0" y="312.5" width="9" height="9.5" fill="#bdb86e" stroke="#d8d8d8" stroke-width="0.6"/>
<!-- quick mask 368.5 => 335.5 -->
<rect x="3" y="331.5" width="9" height="7" fill="#eee" stroke="#444" stroke-width="0.8"/><circle cx="7.5" cy="335" r="2" stroke="#555" stroke-width="0.7" stroke-dasharray="1 0.7"/>
<defs><linearGradient id="gr1"><stop offset="0" stop-color="#444"/><stop offset="1" stop-color="#eee"/></linearGradient></defs>
<!-- fly-out triangles -->
<g fill="#333" stroke="none">
<path d="M13.5 37.5h2v-2z"/><path d="M13.5 50.5h2v-2z"/><path d="M13.5 63.5h2v-2z"/><path d="M13.5 76.5h2v-2z"/><path d="M13.5 89.5h2v-2z"/>
<path d="M13.5 103h2v-2z"/><path d="M13.5 116h2v-2z"/><path d="M13.5 129h2v-2z"/><path d="M13.5 142h2v-2z"/><path d="M13.5 155h2v-2z"/><path d="M13.5 168h2v-2z"/><path d="M13.5 181h2v-2z"/><path d="M13.5 194h2v-2z"/>
<path d="M13.5 208h2v-2z"/><path d="M13.5 221h2v-2z"/><path d="M13.5 234h2v-2z"/><path d="M13.5 247h2v-2z"/>
<path d="M13.5 261h2v-2z"/><path d="M13.5 274h2v-2z"/><path d="M13.5 287h2v-2z"/>
</g>
</svg>
<div class="a" id="tbbelow"></div>

<!-- history panel -->
<div class="a dk" style="left:472px;top:43px;width:119px;height:3.5px"></div>
<div class="a" style="left:472px;top:46.5px;width:119px;height:8.5px;background:linear-gradient(#747474,#888)"></div>
<div class="ptab" style="left:473px;top:46.5px;width:29.5px;height:8.5px;line-height:8.5px">历史记录</div>
<div class="ptab2" style="left:502.5px;top:46.5px;width:25px;height:8.5px;line-height:8.5px;background:#8e8e8e;color:#4a4a4a">动作</div>
<span class="t" style="left:568.5px;top:47px;font-size:3.6px;color:#222;letter-spacing:-0.6px">◀◀</span>
<span class="a" style="left:577.5px;top:48.5px;width:1px;height:5px;background:repeating-linear-gradient(#aaa 0,#aaa 0.6px,transparent 0.6px,transparent 1.2px)"></span>
<span class="t" style="left:581px;top:47px;font-size:3.6px;color:#333">▼</span>
<span class="a" style="left:584px;top:48.5px;width:4.5px;height:4.5px;background:repeating-linear-gradient(#444 0,#444 0.7px,transparent 0.7px,transparent 1.5px)"></span>
<div class="a" style="left:472px;top:55px;width:119px;height:62.5px;background:#d6d6d6"></div>
<!-- rows -->
<div class="a" style="left:473px;top:55px;width:108.5px;height:54.5px;background:#dcdcdc;
 background-image:linear-gradient(#aaa,#aaa),linear-gradient(#aaa,#aaa),linear-gradient(#aaa,#aaa),linear-gradient(#aaa,#aaa),linear-gradient(90deg,#b0b0b0,#b0b0b0),linear-gradient(90deg,#b0b0b0,#b0b0b0);
 background-size:100% 0.7px,100% 0.7px,100% 0.7px,100% 0.7px,0.7px 100%,0.7px 100%;
 background-position:0 10.3px,0 21.3px,0 32px,0 43px,1.5px 0,8.8px 0;background-repeat:no-repeat"></div>
<div class="a" style="left:473px;top:98px;width:108.5px;height:11.3px;background:#3399ff"></div>
<svg width="40" height="60" style="left:473px;top:55px" fill="none" stroke="#333" stroke-width="0.8">
<g id="hi"><rect x="19.5" y="2" width="6.5" height="6.5" fill="#f4f4f4"/><path d="M19.5 4h6.5" /><path d="M24.5 6.5l3 1.3 -3 1.5z" fill="#111" stroke="none"/></g>
<g transform="translate(0 11)"><rect x="19.5" y="2" width="6.5" height="6.5" fill="#f4f4f4"/><path d="M19.5 4h6.5" /><path d="M24.5 6.5l3 1.3 -3 1.5z" fill="#111" stroke="none"/></g>
<rect x="19.5" y="24" width="6.5" height="6.5" stroke-dasharray="1.2 0.9" stroke-width="0.7"/>
<g transform="translate(0 33)"><rect x="19.5" y="2" width="6.5" height="6.5" fill="#f4f4f4"/><path d="M19.5 4h6.5" /><path d="M24.5 6.5l3 1.3 -3 1.5z" fill="#111" stroke="none"/></g>
<g transform="translate(0 44)"><rect x="19.5" y="2" width="6.5" height="6.5" fill="#f4f4f4" stroke="#235"/><path d="M19.5 4h6.5" stroke="#235"/><path d="M24.5 6.5l3 1.3 -3 1.5z" fill="#012" stroke="none"/></g>
<!-- history state pointer -->
<path d="M10.5 46.5h3.5l2 2.2 -2 2.2h-3.5z" fill="#f4f4f4" stroke="#123" stroke-width="0.7"/><circle cx="13" cy="48.7" r="1" fill="#123" stroke="none"/>
</svg>
<span class="t" style="left:505px;top:56.5px;font-size:6.6px">清除</span>
<span class="t" style="left:505px;top:67px;font-size:6.6px">取消选择</span>
<span class="t" style="left:505px;top:78px;font-size:6.6px">矩形选框</span>
<span class="t" style="left:505px;top:89px;font-size:6.6px">清除</span>
<span class="t" style="left:505px;top:100px;font-size:6.6px;color:#fff">取消选择</span>
<!-- history scrollbar -->
<div class="a" style="left:581.5px;top:55px;width:9px;height:54.5px;background:#ececec;border-left:0.5px solid #aaa;box-sizing:border-box"></div>
<span class="t" style="left:584px;top:56px;font-size:3.6px;color:#333">▲</span>
<span class="t" style="left:584px;top:101.5px;font-size:3.6px;color:#333">▼</span>
<div class="a" style="left:583px;top:91px;width:6.5px;height:8px;background:#f8f8f8;border:0.5px solid #aaa;box-sizing:border-box;border-radius:1px"></div>
<!-- history footer icons -->
<svg width="50" height="8" style="left:538px;top:110px" fill="none" stroke="#555" stroke-width="0.8">
<rect x="2" y="1.5" width="7" height="5" fill="#aaa"/><path d="M2 3h7"/>
<rect x="19" y="1" width="5.5" height="5.5" fill="#ddd"/><path d="M15 4h3" stroke="#777"/>
<path d="M35 2.2h6.5l-0.8 4.6h-5z" fill="#999"/><path d="M34.2 2h8" stroke="#444" stroke-width="1"/>
</svg>

<!-- adjustments panel -->
<div class="a dk" style="left:472px;top:117.5px;width:119px;height:7px"></div>
<span class="t" style="left:575.5px;top:117.5px;font-size:3.4px;color:#ddd;letter-spacing:-0.5px">◀◀</span>
<span class="t" style="left:584px;top:117px;font-size:5.5px;color:#ddd;line-height:7px">×</span>
<div class="a" style="left:472px;top:124.5px;width:119px;height:9.5px;background:linear-gradient(#747474,#888)"></div>
<div class="ptab" style="left:473px;top:125px;width:18px">调整</div>
<span class="t" style="left:579.5px;top:125.5px;font-size:3.6px;color:#333">▼</span>
<span class="a" style="left:583px;top:127px;width:4.5px;height:4.5px;background:repeating-linear-gradient(#444 0,#444 0.7px,transparent 0.7px,transparent 1.5px)"></span>
<div class="a panel" style="left:472px;top:134px;width:119px;height:190.5px;border-bottom:0.5px solid #8a8a8a;box-sizing:border-box"></div>
<span class="t" style="left:475.5px;top:138px;font-size:6.6px;color:#111">添加调整</span>
<div class="a" style="left:474px;top:152px;width:114px;height:0.7px;background:#aaa;box-shadow:0 0.7px 0 #eee"></div>
<div class="a" style="left:495px;top:174.5px;width:68px;height:0.7px;background:#aaa;box-shadow:0 0.7px 0 #eee"></div>
<div class="a" style="left:495px;top:196.5px;width:68px;height:0.7px;background:#aaa;box-shadow:0 0.7px 0 #eee"></div>
<svg width="119" height="70" style="left:472px;top:152px">
<defs>
<linearGradient id="g01"><stop offset="0" stop-color="#222"/><stop offset="1" stop-color="#eee"/></linearGradient>
<linearGradient id="g02" x1="0" y1="0" x2="0" y2="1"><stop offset="0" stop-color="#222"/><stop offset="1" stop-color="#eee"/></linearGradient>
</defs>
<!-- row 1: y 6.5..17 -->
<g>
<rect x="28.5" y="6.5" width="12" height="11" fill="#f2f2f2" stroke="#bbb" stroke-width="0.4"/>
<circle cx="34.5" cy="12" r="2" fill="#333"/><path d="M34.5 7.8v1.6M34.5 14.6v1.6M30.3 12h1.6M37.1 12h1.6M31.5 9l1.1 1.1M36.4 13.9l1.1 1.1M31.5 15l1.1-1.1M36.4 10.100l1.1-1.1" stroke="#333" stroke-width="0.7"/>
<rect x="44.500" y="6.5" width="12" height="11" fill="#f2f2f2" stroke="#bbb" stroke-width="0.4"/>
<path d="M45.500 16.500 L46.500 13 L47.500 15 L48.500 10 L49.500 14 L50.500 8.500 L51.500 13 L52.500 10.500 L53.500 14 L54.500 12 L55.500 16.500Z" fill="#333"/>
<rect x="60.500" y="6.5" width="12" height="11" fill="#f2f2f2" stroke="#bbb" stroke-width="0.4"/>
<path d="M62 8v8h9.500M62 16 C66 16 66 9 71 8.500M65 8v8M68 8v8" stroke="#444" stroke-width="0.7" fill="none"/>
<rect x="76.500" y="6.5" width="12" height="11" fill="#f2f2f2" stroke="#bbb" stroke-width="0.4"/>
<path d="M77.500 16.500 L87.500 7.500 L87.500 16.500Z" fill="#222"/><path d="M79 8.500h2.500M80.250 7.300v2.500M84 14.500h2.200" stroke="#333" stroke-width="0.7"/>
</g>
<!-- row 2: y 28..39 -->
<g>
<rect x="12.500" y="28" width="12" height="11" fill="#f2f2f2" stroke="#bbb" stroke-width="0.4"/>
<path d="M14.500 30 L22.500 30 L18.500 37.500Z" fill="none" stroke="#333" stroke-width="1"/>
<rect x="28.500" y="28" width="12" height="11" fill="#f2f2f2" stroke="#bbb" stroke-width="0.4"/>
<rect x="29.500" y="29.500" width="10" height="2.200" fill="#333"/><rect x="29.500" y="32.700" width="10" height="2" fill="#777"/><rect x="29.500" y="35.700" width="10" height="2.300" fill="url(#g01)"/>
<rect x="44.500" y="28" width="12" height="11" fill="#f2f2f2" stroke="#bbb" stroke-width="0.4"/>
<path d="M50.500 29.500v7.500M46 31.500h9M46 31.500l-1 3.500h2.500zM55 31.500l-1.200 3.500h2.500zM48 37.500h5" stroke="#333" stroke-width="0.8" fill="#555"/>
<rect x="60.500" y="28" width="12" height="11" fill="#f2f2f2" stroke="#bbb" stroke-width="0.4"/>
<path d="M61 28.500 L72 28.500 L61 38.500Z" fill="#222"/>
<rect x="76.500" y="28" width="12" height="11" fill="#f2f2f2" stroke="#bbb" stroke-width="0.4"/>
<circle cx="81" cy="32.500" r="2.800" fill="#999" stroke="#444" stroke-width="0.5"/><circle cx="84.500" cy="35" r="2.800" fill="#666" stroke="#333" stroke-width="0.5"/>
<rect x="92.500" y="28" width="12" height="11" fill="#f2f2f2" stroke="#bbb" stroke-width="0.4"/>
<circle cx="97" cy="32" r="2.500" fill="#777"/><circle cx="100.500" cy="33" r="2.500" fill="#444"/><circle cx="98.500" cy="35.500" r="2.500" fill="#999"/>
</g>
<!-- row 3: y 50..61.500 -->
<g>
<rect x="19.500" y="50" width="12" height="11.500" fill="#f2f2f2" stroke="#bbb" stroke-width="0.4"/>
<rect x="25" y="55" width="6" height="6" fill="#222"/><rect x="26.500" y="56.500" width="1.500" height="1.500" fill="#fff"/><rect x="28.500" y="58.500" width="1.500" height="1.500" fill="#fff"/><path d="M21 51.500h3v3h-3z" fill="none" stroke="#444" stroke-width="0.5"/>
<rect x="35.500" y="50" width="12" height="11.500" fill="url(#g01)" stroke="#999" stroke-width="0.4"/>
<path d="M36 61 L47 50.500" stroke="#bbb" stroke-width="2.500"/>
<rect x="51.500" y="50" width="12" height="11.500" fill="#eee" stroke="#999" stroke-width="0.4"/>
<path d="M53 61.500 L60 50 L63.500 50 L56.500 61.500Z" fill="#222"/><path d="M51.500 50h4l-4 7z" fill="#333"/>
<rect x="67.500" y="50" width="12" height="11.500" fill="url(#g01)" stroke="#999" stroke-width="0.4"/>
<rect x="83.500" y="50" width="12" height="11.500" fill="#e8e8e8" stroke="#999" stroke-width="0.4"/>
<path d="M83.500 61.500 L89.500 55.500 L95.500 61.500Z" fill="#444"/><path d="M83.500 50 L89.500 55.500 L95.500 50" fill="none" stroke="#999" stroke-width="0.6"/>
</g>
</svg>
<!-- preset list -->
<div class="a" style="left:479.5px;top:223.5px;width:95.5px;height:12.6px;background:#d4d4d4;border:0.8px solid #444;box-sizing:border-box"></div>
<div class="a" style="left:479.5px;top:235.3px;width:95.5px;height:12.6px;background:#d4d4d4;border:0.8px solid #444;box-sizing:border-box"></div>
<div class="a" style="left:479.5px;top:247.1px;width:95.5px;height:12.6px;background:#d4d4d4;border:0.8px solid #444;box-sizing:border-box"></div>
<div class="a" style="left:479.5px;top:258.9px;width:95.5px;height:12.6px;background:#d4d4d4;border:0.8px solid #444;box-sizing:border-box"></div>
<div class="a" style="left:479.5px;top:270.7px;width:95.5px;height:12.6px;background:#d4d4d4;border:0.8px solid #444;box-sizing:border-box"></div>
<div class="a" style="left:479.5px;top:282.5px;width:95.5px;height:12.6px;background:#d4d4d4;border:0.8px solid #444;box-sizing:border-box"></div>
<div class="a" style="left:479.5px;top:294.3px;width:95.5px;height:12.6px;background:#d4d4d4;border:0.8px solid #444;box-sizing:border-box"></div>
<div class="a" style="left:575px;top:223.5px;width:9px;height:82.800px;background:#ececec;border:0.5px solid #bbb;box-sizing:border-box"></div>
<span class="t" style="left:577.500px;top:225px;font-size:3.6px;color:#555">▲</span>
<span class="t" style="left:577.500px;top:298px;font-size:3.6px;color:#555">▼</span>
<span class="t" style="left:482px;top:225.600px;font-size:4.600px;color:#444">▶</span><span class="t" style="left:489px;top:225.600px;font-size:6.6px">"色阶"预设</span>
<span class="t" style="left:482px;top:237.400px;font-size:4.600px;color:#444">▶</span><span class="t" style="left:489px;top:237.400px;font-size:6.6px">"曲线"预设</span>
<span class="t" style="left:482px;top:249.200px;font-size:4.600px;color:#444">▶</span><span class="t" style="left:489px;top:249.200px;font-size:6.6px">"曝光度"预设</span>
<span class="t" style="left:482px;top:261px;font-size:4.600px;color:#444">▶</span><span class="t" style="left:489px;top:261px;font-size:6.6px">"色相/饱和度"预设</span>
<span class="t" style="left:482px;top:272.800px;font-size:4.600px;color:#444">▶</span><span class="t" style="left:489px;top:272.800px;font-size:6.6px">"黑白"预设</span>
<span class="t" style="left:482px;top:284.600px;font-size:4.600px;color:#444">▶</span><span class="t" style="left:489px;top:284.600px;font-size:6.6px">"通道混和器"预设</span>
<span class="t" style="left:482px;top:296.400px;font-size:4.600px;color:#444">▶</span><span class="t" style="left:489px;top:296.400px;font-size:6.6px">"可选颜色"预设</span>
<!-- adj footer -->
<svg width="119" height="12" style="left:472px;top:310px" fill="none" stroke="#444" stroke-width="0.8">
<rect x="19.500" y="2.500" width="6" height="4.500" fill="#eee"/><circle cx="26.500" cy="7.500" r="2" fill="#ccc"/>
<circle cx="106.500" cy="5.500" r="2.600" fill="#222" stroke="none"/><circle cx="110" cy="5.500" r="2.200" fill="#666" stroke="#222" stroke-width="0.6"/><path d="M112.500 3v5" stroke="#222" stroke-width="1"/>
</svg>

<!-- right dock -->
<div class="a" style="left:591px;top:33px;width:129px;height:363px;background:#535353"></div>
<div class="a" style="left:591px;top:33px;width:129px;height:6.500px;background:#454545"></div>
<span class="t" style="left:605.500px;top:33.500px;font-size:3.600px;color:#ddd;letter-spacing:-0.5px;line-height:6px">◀◀</span>
<!-- icon strip -->
<div class="a" style="left:592.500px;top:40px;width:17px;height:36.500px;background:#d2d2d2"></div>
<div class="a" style="left:592.500px;top:78px;width:17px;height:41.500px;background:#d2d2d2"></div>
<div class="a" style="left:594px;top:46.500px;width:14px;height:14.500px;background:#bdbdbd;border:0.7px solid #777;border-radius:1.500px;box-sizing:border-box"></div>
<svg width="17" height="80" style="left:592.500px;top:40px" fill="none" stroke="#333" stroke-width="1">
<path d="M5 9.500h4.500v3M5 13h3M10.500 9.500v8M6 16.500l2.500-2 -0.500 3.500z" stroke="#333" stroke-width="1.100"/>
<rect x="4.500" y="28" width="8.500" height="7" fill="#bbb" stroke="#444" stroke-width="0.900"/><path d="M7.500 29.800l3.500 1.800-3.500 1.800z" fill="#222" stroke="none"/>
<path d="M4.800 65 L7.700 56.500 L10.600 65M5.800 62h3.800M12.300 56v9.500" stroke="#333" stroke-width="1.100"/>
<path d="M10.500 72v8.500M8.300 72v8.500M8.300 72h4.200" stroke="#333" stroke-width="1"/><path d="M8.300 72a2.400 2.400 0 0 0 0 4.800z" fill="#333" stroke="none"/>
</svg>

<!-- color panel -->
<div class="a" style="left:611.500px;top:39.500px;width:108.500px;height:9.500px;background:linear-gradient(#747474,#888)"></div>
<div class="ptab" style="left:612px;top:40px;width:18px">颜色</div>
<div class="ptab2" style="left:630px;top:40px;width:19px;background:#909090">色板</div>
<div class="ptab2" style="left:649px;top:40px;width:19px;background:#909090">样式</div>
<div class="a panel" style="left:611.500px;top:49px;width:108.500px;height:62px"></div>
<div class="a" style="left:624px;top:63.500px;width:9.500px;height:9px;background:#f23838"></div>
<div class="a" style="left:616px;top:55.500px;width:11px;height:10.500px;background:#d3c37c;border:0.8px solid #222;box-sizing:border-box;outline:0.6px solid #eee"></div>
<span class="t" style="left:637px;top:56.500px;font-size:6px">R</span>
<span class="t" style="left:637px;top:70.500px;font-size:6px">G</span>
<span class="t" style="left:637px;top:85.500px;font-size:6px">B</span>
<div class="a" style="left:643.5px;top:57.3px;width:54px;height:4.4px;background:linear-gradient(90deg,#19be7c,#e6e070);border:0.4px solid #999;box-sizing:border-box"></div>
<div class="a" style="left:643.5px;top:71px;width:54px;height:4.4px;background:linear-gradient(90deg,#c20a7c,#d7d36e);border:0.4px solid #999;box-sizing:border-box"></div>
<div class="a" style="left:643.5px;top:85.5px;width:54px;height:4.4px;background:linear-gradient(90deg,#c2be00,#c8c4e0);border:0.4px solid #999;box-sizing:border-box"></div>
<svg width="60" height="40" style="left:643.500px;top:58px" fill="#eee" stroke="#444" stroke-width="0.6"><path d="M40.500 4l2.300 3.300h-4.600z"/><path d="M39.800 17.700l2.300 3.300h-4.600z"/></svg>
<div class="a" style="left:700.500px;top:53px;width:20px;height:11.500px;background:#fbfbfb;border:0.5px solid #aaa;box-sizing:border-box"></div>
<div class="a" style="left:700.500px;top:67.500px;width:20px;height:11.500px;background:#fbfbfb;border:0.5px solid #aaa;box-sizing:border-box"></div>
<div class="a" style="left:700.500px;top:82px;width:20px;height:11.500px;background:#fbfbfb;border:0.5px solid #aaa;box-sizing:border-box"></div>
<span class="t" style="left:703px;top:55px;font-size:6px">194</span>
<span class="t" style="left:703px;top:69.500px;font-size:6px">190</span>
<span class="t" style="left:703px;top:84px;font-size:6px">123</span>
<div class="a" style="left:615.500px;top:101px;width:104.500px;height:7.500px;background:linear-gradient(rgba(255,255,255,.0),rgba(0,0,0,.55)),linear-gradient(90deg,#f00,#ff0 17%,#0f0 33%,#0ff 50%,#00f 67%,#f0f 83%,#f00)"></div>

<!-- masks (collapsed) -->
<div class="a" style="left:611.500px;top:113.500px;width:108.500px;height:10.500px;background:linear-gradient(#747474,#888)"></div>
<div class="ptab" style="left:612px;top:114px;width:18px;height:10px;line-height:10px">蒙版</div>

<!-- layers panel -->
<div class="a" style="left:611.500px;top:126.500px;width:108.500px;height:9.500px;background:linear-gradient(#747474,#888)"></div>
<div class="ptab" style="left:612px;top:127px;width:19px">图层</div>
<div class="ptab2" style="left:631px;top:127px;width:19.500px;background:#909090">通道</div>
<div class="ptab2" style="left:650.500px;top:127px;width:20.500px;background:#909090">路径</div>
<div class="a panel" style="left:611px;top:136px;width:109px;height:260px"></div>
<div class="a" style="left:614px;top:138.500px;width:66.500px;height:11.500px;background:#fbfbfb;border:0.5px solid #aaa;box-sizing:border-box"></div>
<span class="t" style="left:617.500px;top:140.500px;font-size:6.6px">正常</span>
<span class="t" style="left:674px;top:140.500px;font-size:4.200px">▼</span>
<span class="t" style="left:683px;top:140.500px;font-size:6.6px">不透明度:</span>
<div class="a" style="left:713.500px;top:138.500px;width:8px;height:11.500px;background:#fbfbfb;border:0.5px solid #aaa;box-sizing:border-box"></div>
<span class="t" style="left:715px;top:140.500px;font-size:6px">100</span>
<span class="t" style="left:615.500px;top:154px;font-size:6.6px">锁定:</span>
<svg width="50" height="12" style="left:630px;top:152px" fill="none" stroke="#333" stroke-width="0.8">
<rect x="2.500" y="2.500" width="5.500" height="5.500" fill="#eee" stroke="#666"/>
<path d="M13 9l5-5.500" stroke-width="1.400"/>
<path d="M26.500 2.500v7M23 6h7" stroke-width="1"/>
<rect x="34.500" y="5.500" width="5" height="4" fill="#333" stroke="none"/><path d="M35.500 5.500v-1.200a1.500 1.500 0 0 1 3 0v1.200"/>
</svg>
<span class="t" style="left:697px;top:154px;font-size:6.6px">填充:</span>
<div class="a" style="left:713.500px;top:152px;width:8px;height:11.500px;background:#fbfbfb;border:0.5px solid #aaa;box-sizing:border-box"></div>
<span class="t" style="left:715px;top:154px;font-size:6px">100</span>
<!-- layer rows -->
<div class="a" style="left:611.500px;top:165px;width:108.500px;height:54.500px;background:#d0d0d0"></div>
<div class="a" style="left:623.500px;top:165px;width:96.500px;height:18.300px;background:#3399ff"></div>
<div class="a" style="left:611.500px;top:183.300px;width:108.500px;height:0.7px;background:#909090"></div>
<div class="a" style="left:611.500px;top:201.300px;width:108.500px;height:0.7px;background:#909090"></div>
<div class="a" style="left:611.500px;top:219.300px;width:108.500px;height:0.7px;background:#909090"></div>
<div class="a" style="left:623.500px;top:165px;width:0.7px;height:54.500px;background:#aaa"></div>
<svg width="110" height="56" style="left:611.500px;top:165px">
<defs><pattern id="chk" width="2.400" height="2.400" patternUnits="userSpaceOnUse"><rect width="2.400" height="2.400" fill="#fff"/><rect width="1.200" height="1.200" fill="#ccc"/><rect x="1.200" y="1.200" width="1.200" height="1.200" fill="#ccc"/></pattern></defs>
<g fill="#222"><ellipse cx="6" cy="9" rx="3" ry="1.900"/><ellipse cx="6" cy="27.300" rx="3" ry="1.900"/><ellipse cx="6" cy="45.300" rx="3" ry="1.900"/></g>
<g fill="#ddd"><circle cx="6" cy="8.600" r="0.700"/><circle cx="6" cy="26.900" r="0.700"/><circle cx="6" cy="44.900" r="0.700"/></g>
<rect x="14.500" y="2" width="19" height="14.500" fill="url(#chk)" stroke="#222" stroke-width="0.800"/>
<path d="M19.500 10 a4 4 0 0 1 8 0 h-2.200 a2.900 2.900 0 0 0 -5.800 0z" fill="#f6e72f"/>
<rect x="16" y="20.300" width="16" height="14" fill="url(#chk)" stroke="#222" stroke-width="0.700"/>
<path d="M28.500 27 q0 6 -6.500 5.500 q-3 -0.500 -4 -3 q3 3.500 6 1.500 q2.500 -1.500 2.300 -4z" fill="#1856a7"/>
<rect x="16" y="38.500" width="16" height="14" fill="#fff" stroke="#222" stroke-width="0.700"/>
</svg>
<span class="t" style="left:649px;top:170px;font-size:6.6px;color:#e8f2ff">形状 2</span>
<span class="t" style="left:649px;top:188.300px;font-size:6.6px">形状 1</span>
<span class="t" style="left:649px;top:206.300px;font-size:6.6px;font-style:italic">背景</span>
<!-- layers footer -->
<div class="a" style="left:611px;top:386.3px;width:109px;height:9.7px;background:#d6d6d6;border-top:0.6px solid #999;box-sizing:border-box"></div>
<svg width="90" height="10" style="left:636px;top:386.3px" fill="none" stroke="#444" stroke-width="0.8">
<path d="M2 5h2.500M4 5h2.500" stroke="#888" stroke-width="1.500"/>
<text x="16" y="7.500" font-family="Liberation Serif,serif" font-style="italic" font-size="6.500" fill="#333" stroke="none">fx.</text>
<rect x="30.500" y="2" width="6.500" height="6" fill="#ddd"/><circle cx="33.800" cy="5" r="1.600" fill="#fff" stroke="#555" stroke-width="0.500"/>
<circle cx="48" cy="5" r="2.800" fill="#fff" stroke="#333"/><path d="M48 2.200a2.800 2.800 0 0 0 0 5.600z" fill="#333" stroke="none"/><path d="M52 6.500v2" />
<path d="M59 3.500h7v4.500h-7z" fill="#ddd" stroke="#555"/>
<path d="M73 3h6v5.500h-6z" fill="#eee" stroke="#555"/>
</svg>

<!-- network-speed overlay widgets -->
<div class="a" style="left:670px;top:32px;width:60px;height:17.5px;background:#f8f8f8;border-radius:9px 0 0 9px;box-shadow:0 0.5px 2px rgba(0,0,0,.35)"></div>
<div class="a" style="left:660.8px;top:27.6px;width:25.4px;height:25.4px;border-radius:50%;background:linear-gradient(#8fe3ae 0,#6fd795 30%,#2fb765 42%,#27a85a 100%);border:1.3px solid #dff3e6;box-sizing:border-box;box-shadow:0 0.5px 2px rgba(0,0,0,.4)"></div>
<span class="t" style="left:665.5px;top:37px;font-size:7px;color:#e8fff0;font-weight:bold;letter-spacing:-0.2px">58%</span>
<span class="t" style="left:689.5px;top:33px;font-size:5.5px;color:#f08a3c;line-height:7px;font-weight:bold">↑</span>
<span class="t" style="left:689.5px;top:41px;font-size:5.5px;color:#3cb464;line-height:7px;font-weight:bold">↓</span>
<span class="t" style="left:704px;top:33px;font-size:5.6px;color:#333">0K/s</span>
<span class="t" style="left:704px;top:41px;font-size:5.6px;color:#333">0K/s</span>
<div class="a" style="left:716px;top:35.5px;width:10px;height:10px;border-radius:50%;background:#2f86d8"></div>

<div class="a" style="left:670px;top:85.5px;width:60px;height:23px;background:linear-gradient(90deg,#3a3a40,#2e2a30);border-radius:11px 0 0 11px"></div>
<div class="a" style="left:698px;top:87.5px;width:30px;height:8.5px;background:#48444a;border-radius:4px"></div>
<div class="a" style="left:698px;top:98px;width:30px;height:8.5px;background:#48444a;border-radius:4px"></div>
<div class="a" style="left:655.8px;top:81.4px;width:32px;height:32px;border-radius:50%;background:#2f3a4b;border:2px solid #667c7a;box-sizing:border-box;box-shadow:0 0 2px rgba(0,0,0,.55)"></div>
<span class="t" style="left:662.6px;top:90.5px;font-size:12px;line-height:14px;height:14px;color:#eef1f6;transform:scaleY(1.25);transform-origin:50% 50%">59</span>
<span class="t" style="left:677.5px;top:97.5px;font-size:5px;color:#e8e8e8">%</span>
<span class="a" style="left:691.5px;top:90.5px;width:2.4px;height:2.4px;border-radius:50%;background:#6f8292"></span>
<span class="a" style="left:691.5px;top:101.5px;width:2.4px;height:2.4px;border-radius:50%;background:#6f8292"></span>
<span class="t" style="left:704px;top:88px;font-size:5.6px;color:#b4b4bc">0K/s</span>
<span class="t" style="left:704px;top:98.5px;font-size:5.6px;color:#b4b4bc">0K/s</span>

</body></html>
